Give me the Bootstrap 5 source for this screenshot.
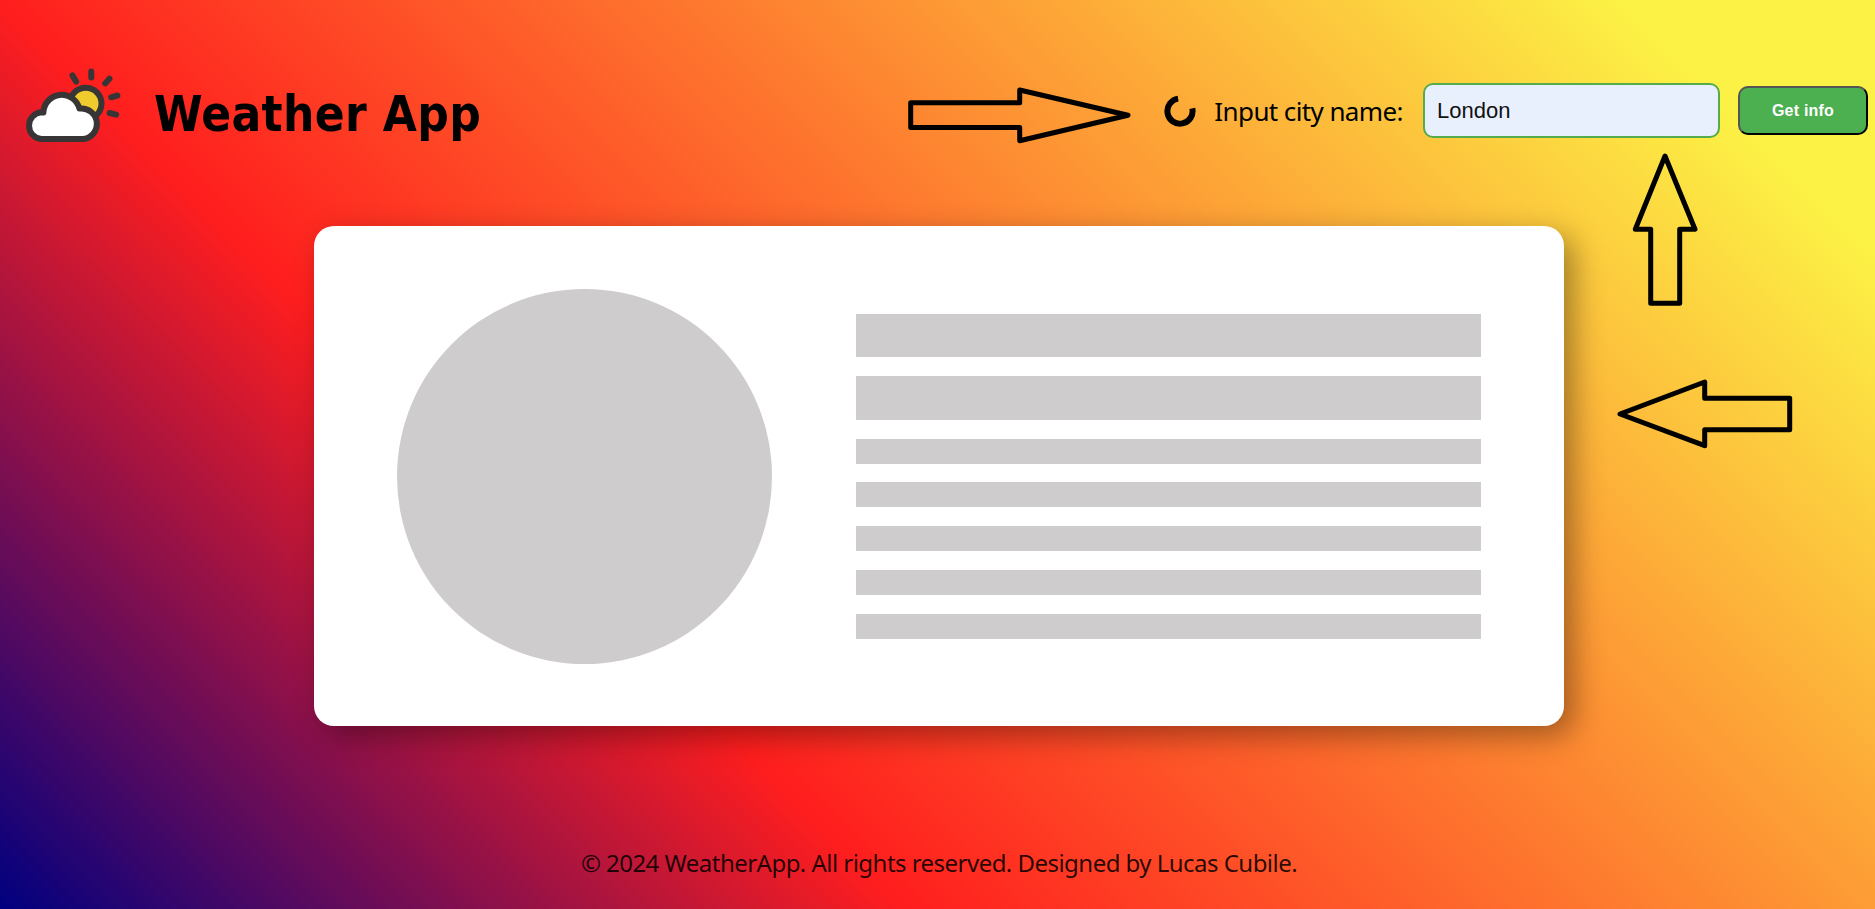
<!DOCTYPE html>
<html lang="en">
<head>
<meta charset="utf-8">
<meta name="viewport" content="width=device-width, initial-scale=1">
<title>Weather App</title>
<link href="https://cdn.jsdelivr.net/npm/bootstrap@5.3.0/dist/css/bootstrap.min.css" rel="stylesheet">
<style>
body{height:909px;overflow:hidden;color:#000;font-family:"Noto Sans",sans-serif;background:linear-gradient(45deg,#000080 0%,#ff1e1e 32.6%,#fcf245 91%)}
.top-bar{height:226px;padding:0 7px 5px 15px}
.logo{width:120px;height:90px;margin-bottom:10px}
.app-title{font:bold 49px/58px "DejaVu Sans Condensed","DejaVu Sans",sans-serif;margin:8px 0 0 19px;letter-spacing:.35px;white-space:nowrap}
.city-label{font-size:26px;line-height:32px;letter-spacing:-.6px;margin:1px 20px 0 18px;white-space:nowrap}
.city-input{width:297px;height:55px;border:2px solid #56ab4c;border-radius:10px;background:#e8f0fe;padding:0 12px;font:22px "Liberation Sans",sans-serif;color:#111;margin-right:18px}
.info-btn{width:130px;height:49px;border:2px outset #000;border-radius:10px;background:#4caf50;color:#fff;font:bold 16px "Liberation Sans",sans-serif;letter-spacing:.2px;padding:0}
.weather-panel{width:1250px;height:500px;border-radius:20px;margin-left:314px;padding:0 83px;box-shadow:10px 10px 30px rgba(0,0,0,.36)}
.disc{width:375px;height:375px}
.bone{background:#cecccd}
.lines{width:625px;gap:18.75px}
.tall{height:43.75px}.thin{height:25px}
.credits{font-size:24px;line-height:32px;letter-spacing:-.53px;color:rgba(0,0,0,.85);margin-top:121px;padding-left:3px;white-space:nowrap}
.arrows{left:0;top:0;pointer-events:none}
</style>
</head>
<body class="position-relative">
<header class="top-bar d-flex align-items-center justify-content-between">
  <div class="d-flex align-items-center">
    <svg class="logo" viewBox="0 0 120 90" fill="none" stroke="#373535" stroke-width="6" stroke-linecap="round">
      <circle cx="70.7" cy="42.5" r="15.8" fill="#f0cb2e"/>
      <path d="M26.3 78a13.4 13.4 0 0 1 0-26.7q1 0 2.1.1A18.3 18.3 0 0 1 64.4 47.6A15.2 15.2 0 1 1 68.6 78Z" fill="#fff" stroke-linejoin="round"/>
      <path stroke-width="6" d="M57.5 14.4l3.6 6.2M76.3 10.5v6M94.4 17.8l-4.2 4.6M102.4 34.5l-6.2 1.8M94.6 52l6.6 1.6"/>
    </svg>
    <h1 class="app-title">Weather App</h1>
  </div>
  <form class="d-flex align-items-center">
    <svg width="32" height="32" viewBox="-16 -16 32 32"><path d="M12.3-2.6A12.6 12.6 0 1 1-1.9-12.4" fill="none" stroke="#000" stroke-width="6"/></svg>
    <label class="city-label" for="city">Input city name:</label>
    <input class="city-input" id="city" type="text" value="London">
    <button class="info-btn" type="button">Get info</button>
  </form>
</header>
<main class="weather-panel bg-white d-flex align-items-center justify-content-between">
  <div class="disc bone rounded-circle"></div>
  <div class="lines d-flex flex-column">
    <div class="bone tall"></div><div class="bone tall"></div>
    <div class="bone thin"></div><div class="bone thin"></div><div class="bone thin"></div><div class="bone thin"></div><div class="bone thin"></div>
  </div>
</main>
<footer class="credits text-center"><span>© 2024 WeatherApp. All rights reserved. Designed by Lucas Cubile.</span></footer>
<svg class="arrows position-absolute" width="1875" height="909" fill="none" stroke="#000" stroke-width="5" stroke-linejoin="round">
  <path d="M910.7 102.7H1019.7V90L1128 115.3 1019.7 140.7V127.5H910.7Z"/>
  <path d="M1665 156L1695 229.3H1679.7V303.3H1650.7V229.3H1635.3Z"/>
  <path d="M1620 414L1704.7 382V398.3H1789.7V429.7H1704.7V445.7Z"/>
</svg>
<script src="https://cdn.jsdelivr.net/npm/bootstrap@5.3.0/dist/js/bootstrap.bundle.min.js"></script>
</body>
</html>
